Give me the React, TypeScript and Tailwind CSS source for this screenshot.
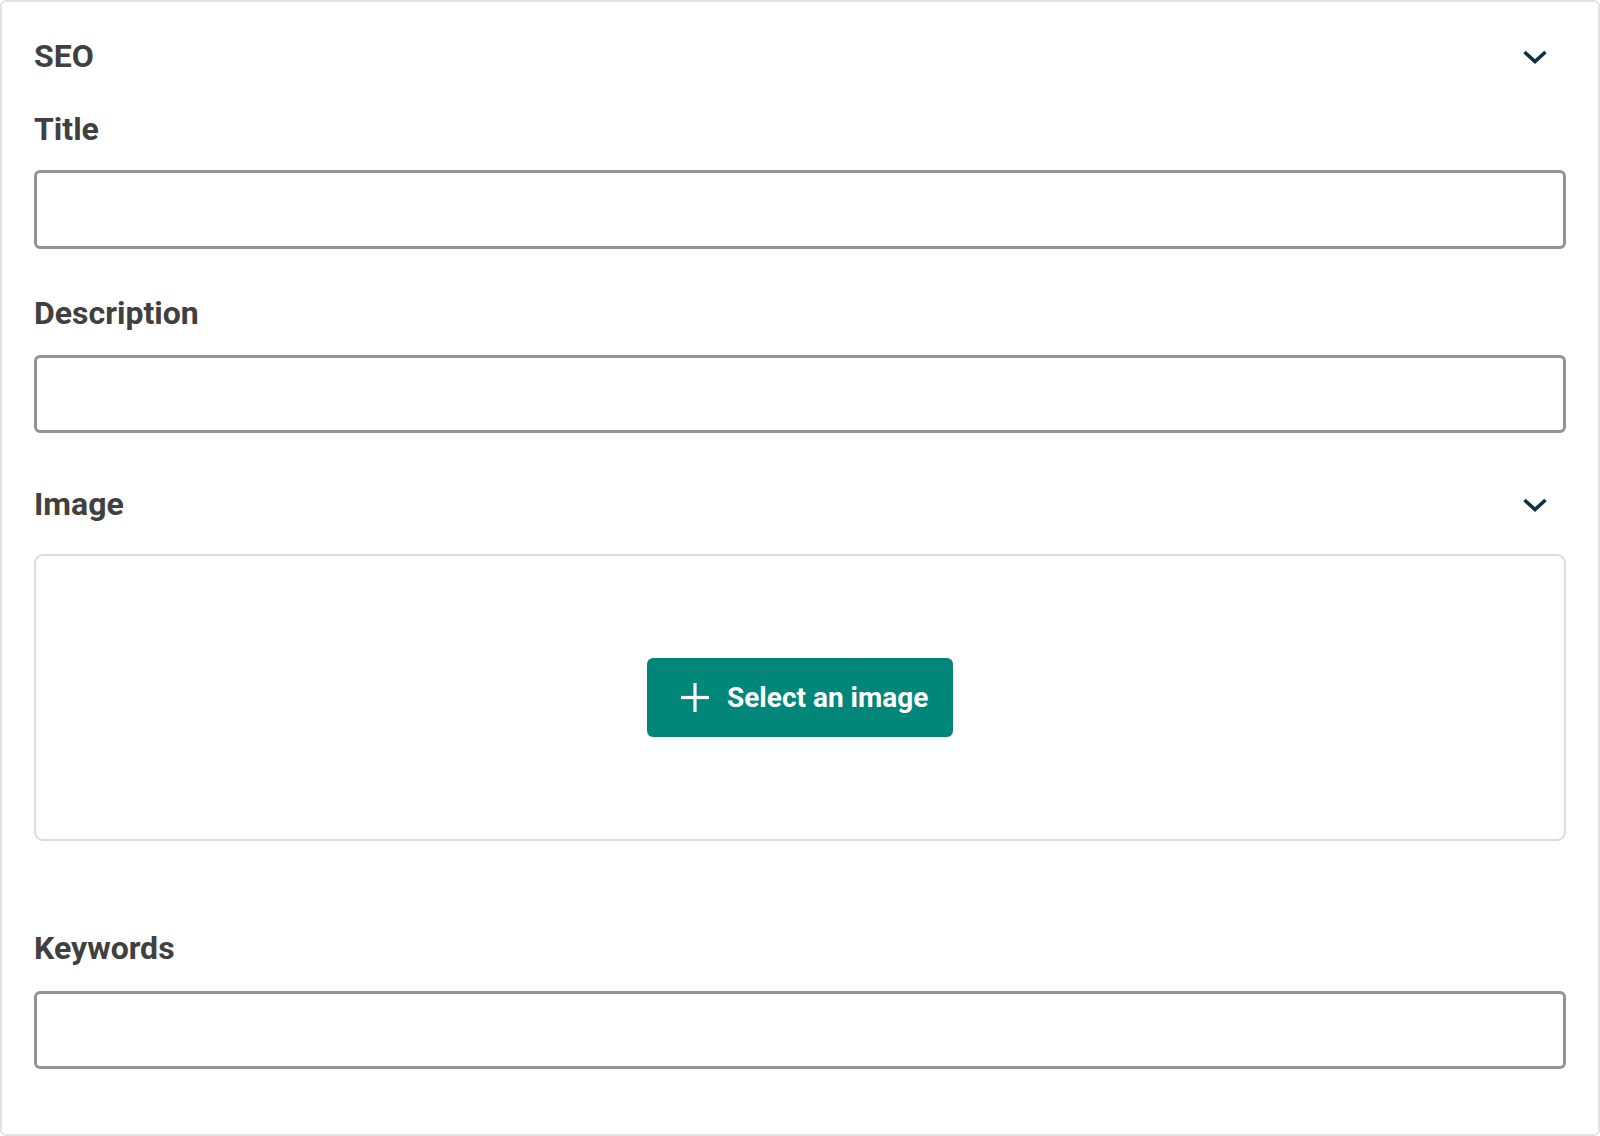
import React from "react";

function Chevron() {
  return (
    <svg width="26" height="16" viewBox="0 0 26 16" className="mr-[18px]" aria-hidden="true">
      <polyline points="2.5,3 13,12.5 23.5,3" fill="none" stroke="#0e2f45" strokeWidth="3.6" strokeLinecap="butt" strokeLinejoin="miter" />
    </svg>
  );
}

function Label({ children }: { children: React.ReactNode }) {
  return <div className="text-[32px] leading-[36px] font-bold text-[#404040]">{children}</div>;
}

function Field({ className = "" }: { className?: string }) {
  return (
    <input
      type="text"
      className={`block w-full border-[3px] border-[#939393] rounded-[6px] bg-white outline-none ${className}`}
    />
  );
}

export default function App() {
  return (
    <div className="bg-white w-[1600px] h-[1136px]" style={{ fontFamily: "Roboto, 'Noto Sans', sans-serif" }}>
      <div className="h-[1136px] border-2 border-[#e2e2e2] rounded-[6px] px-8 pt-[36px]">
        <div className="flex items-center justify-between h-[36px]">
          <Label>SEO</Label>
          <div className="pt-[2px]">
            <Chevron />
          </div>
        </div>

        <div className="mt-[37px]">
          <Label>Title</Label>
        </div>
        <Field className="mt-[23px] h-[79px]" />

        <div className="mt-[46px]">
          <Label>Description</Label>
        </div>
        <Field className="mt-[24px] h-[78px]" />

        <div className="mt-[53px] flex items-center justify-between h-[36px]">
          <Label>Image</Label>
          <div className="pt-[2px]">
            <Chevron />
          </div>
        </div>

        <div className="mt-[32px] h-[287px] border-2 border-[#dcdcdc] rounded-[9px] flex items-center justify-center">
          <button
            type="button"
            className="h-[79px] w-[306px] bg-[#00877a] rounded-[6px] flex items-center pl-[34px] text-white text-[28px] font-bold leading-none"
          >
            <svg width="28" height="29" viewBox="0 0 28 29" aria-hidden="true">
              <line x1="14" y1="0" x2="14" y2="29" stroke="white" strokeWidth="3.2" />
              <line x1="0" y1="14.5" x2="28" y2="14.5" stroke="white" strokeWidth="3.2" />
            </svg>
            <span className="ml-[18px]">Select an image</span>
          </button>
        </div>

        <div className="mt-[89px]">
          <Label>Keywords</Label>
        </div>
        <Field className="mt-[25px] h-[78px]" />
      </div>
    </div>
  );
}
